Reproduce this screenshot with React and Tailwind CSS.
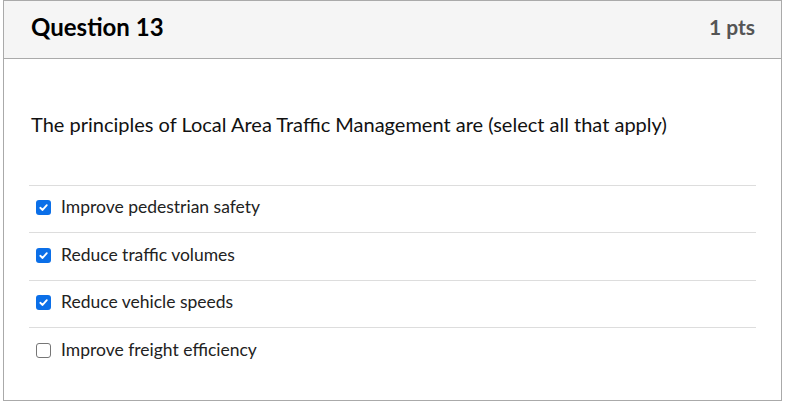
import React from "react";

const options = [
  { label: "Improve pedestrian safety", checked: true },
  { label: "Reduce traffic volumes", checked: true },
  { label: "Reduce vehicle speeds", checked: true },
  { label: "Improve freight efficiency", checked: false },
];

function Box({ checked }) {
  if (checked) {
    return (
      <span className="flex h-[15px] w-[15px] items-center justify-center rounded-[3px] bg-[#0b6fe8]">
        <svg width="11" height="11" viewBox="0 0 12 12" fill="none">
          <path d="M2.5 6.3 L5 8.7 L9.6 3.4" stroke="white" strokeWidth="2" strokeLinecap="round" strokeLinejoin="round" />
        </svg>
      </span>
    );
  }
  return <span className="block h-[15px] w-[15px] rounded-[3px] border border-[#767676] bg-white" />;
}

export default function App() {
  return (
    <div className="h-[410px] w-[790px] bg-white pl-[3px] font-['Lato',sans-serif] text-[#111]">
      <div className="h-[401px] w-[779px] border border-[#aaaaaa]">
        <div className="flex h-[58px] items-center justify-between border-b border-[#aaaaaa] bg-[#f5f5f5] pb-[5px] pl-[27px] pr-[26px]">
          <span className="text-[24px] leading-[28px] font-bold text-black">Question 13</span>
          <span className="text-[21px] leading-[26px] font-bold text-[#555]">1 pts</span>
        </div>
        <div className="px-[25px]">
          <p className="mt-[53px] pl-[2px] text-[20px] leading-[24px] text-[#111]">
            The principles of Local Area Traffic Management are (select all that apply)
          </p>
          <div className="mt-[49px] border-t border-[#dddddd]">
            {options.map((o, i) => (
              <div
                key={i}
                className={`flex items-center gap-[10px] pb-[3px] pl-[7px] ${i === 1 ? "h-[48px]" : "h-[47px]"} ${i < options.length - 1 ? "border-b border-[#dddddd]" : ""}`}
              >
                <Box checked={o.checked} />
                <span className="text-[17.5px] text-[#222]">{o.label}</span>
              </div>
            ))}
          </div>
        </div>
      </div>
    </div>
  );
}
